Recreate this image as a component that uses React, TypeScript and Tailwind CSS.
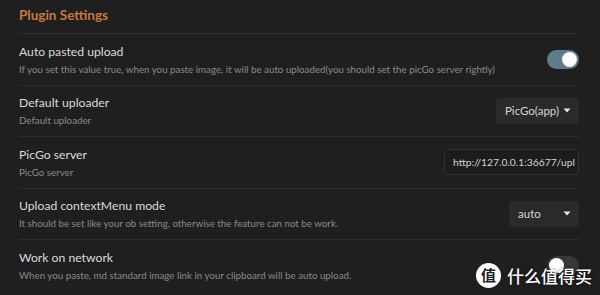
import React from "react";

type Ctrl =
  | { kind: "toggle"; on: boolean }
  | { kind: "select"; value: string; w: string }
  | { kind: "input"; value: string };

const rows: { title: string; desc: string; ctrl: Ctrl }[] = [
  {
    title: "Auto pasted upload",
    desc: "If you set this value true, when you paste image, it will be auto uploaded(you should set the picGo server rightly)",
    ctrl: { kind: "toggle", on: true },
  },
  {
    title: "Default uploader",
    desc: "Default uploader",
    ctrl: { kind: "select", value: "PicGo(app)", w: "w-[83px]" },
  },
  {
    title: "PicGo server",
    desc: "PicGo server",
    ctrl: { kind: "input", value: "http://127.0.0.1:36677/upl" },
  },
  {
    title: "Upload contextMenu mode",
    desc: "It should be set like your ob setting, otherwise the feature can not be work.",
    ctrl: { kind: "select", value: "auto", w: "w-[70px]" },
  },
  {
    title: "Work on network",
    desc: "When you paste, md standard image link in your clipboard will be auto upload.",
    ctrl: { kind: "toggle", on: false },
  },
];

function Caret() {
  return (
    <svg width="8" height="5" viewBox="0 0 8 5" className="shrink-0">
      <path d="M0.5 0.5 H7.5 L4 4.5 Z" fill="#e6e6e6" />
    </svg>
  );
}

function Control({ c }: { c: Ctrl }) {
  if (c.kind === "toggle") {
    return (
      <div
        className={`flex h-[19px] w-[32px] shrink-0 items-center rounded-full px-[2px] ${
          c.on ? "justify-end bg-[#5f7b8d]" : "justify-start bg-[#383838]"
        }`}
      >
        <div className="h-[15px] w-[15px] rounded-full bg-white" />
      </div>
    );
  }
  if (c.kind === "select") {
    return (
      <div
        className={`flex h-[26px] ${c.w} shrink-0 items-center justify-between rounded-[4px] bg-[#2a2a2a] pl-[9px] pr-[8px] text-[11.5px] text-[#d4d4d4]`}
      >
        <span>{c.value}</span>
        <Caret />
      </div>
    );
  }
  return (
    <div className="flex h-[26px] w-[135px] shrink-0 items-center overflow-hidden rounded-[4px] border border-[#303030] bg-[#1c1c1c] pl-[8px] pr-[4px] text-[10.3px] text-[#d4d4d4]">
      <span className="block whitespace-nowrap">{c.value}</span>
    </div>
  );
}

export default function App() {
  return (
    <div
      className="relative h-[295px] w-[600px] overflow-hidden bg-[#1f1f1f] pl-[19px] pr-[21px]"
      style={{ fontFamily: 'Lato, "Open Sans", sans-serif' }}
    >
      <div className="flex h-[33px] items-center pb-[3px] text-[13.5px] font-bold text-[#c9783e]">
        Plugin Settings
      </div>
      {rows.map((r) => (
        <div
          key={r.title}
          className="flex h-[51.5px] items-center justify-between gap-4 border-t border-[#2e2e2e]"
        >
          <div className="flex flex-col gap-[2px]">
            <div className="text-[12.2px] leading-[17px] text-[#dadada]">{r.title}</div>
            <div className="whitespace-nowrap text-[9.75px] leading-[14px] text-[#8a8a8a]">
              {r.desc}
            </div>
          </div>
          <Control c={r.ctrl} />
        </div>
      ))}

      <div className="absolute left-[476px] top-[263px] flex items-center gap-[6px]">
        <div
          className="flex h-[25px] w-[25px] items-center justify-center rounded-full bg-white text-[15px] font-bold text-[#1f1f1f]"
          style={{ fontFamily: '"Noto Sans CJK SC", sans-serif' }}
        >
          值
        </div>
        <div
          className="text-[17px] font-medium leading-none text-white"
          style={{
            fontFamily: '"Noto Sans CJK SC", sans-serif',
            textShadow: "0 0 3px rgba(0,0,0,0.6)",
          }}
        >
          什么值得买
        </div>
      </div>
    </div>
  );
}
